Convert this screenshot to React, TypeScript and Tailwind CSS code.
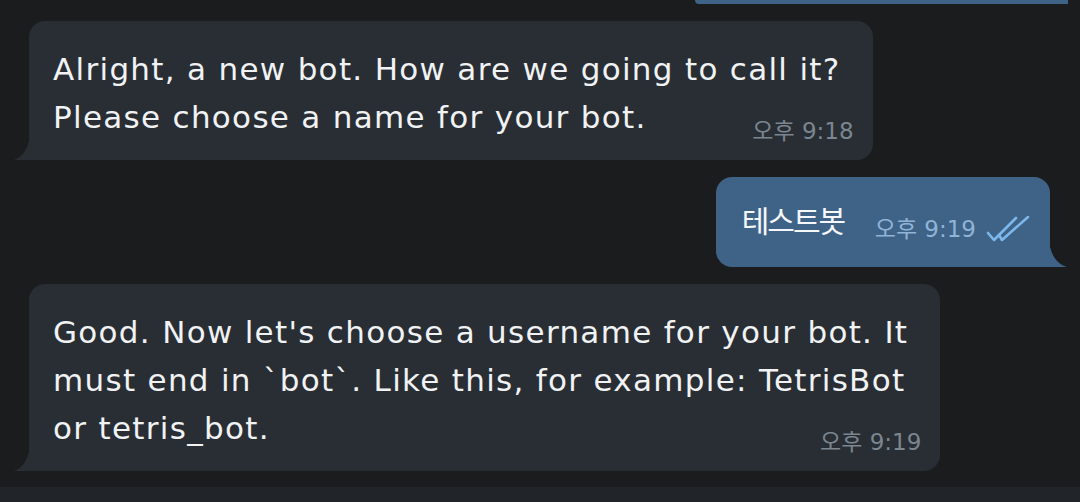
const font = "font-['DejaVu_Sans','Noto_Sans_CJK_KR',sans-serif]";

const TailLeft = () => (
  <svg
    className="absolute bottom-0 -left-[15px]"
    width="16"
    height="30"
    viewBox="0 0 16 30"
  >
    <path d="M16 0 C16 17 9 27 0 30 H16 Z" fill="#282e34" />
  </svg>
);

const TailRight = () => (
  <svg
    className="absolute bottom-0 -right-[17px]"
    width="18"
    height="30"
    viewBox="0 0 18 30"
  >
    <path d="M0 0 C0 17 8 27 18 30 H0 Z" fill="#3f6387" />
  </svg>
);

const DoubleCheck = () => (
  <svg width="44" height="27" viewBox="0 0 44 27" fill="none">
    <path
      d="M2 17 L8 24 L30 2"
      stroke="#7cb8ee"
      strokeWidth="2.6"
      strokeLinecap="round"
      strokeLinejoin="round"
    />
    <path
      d="M13 19 L16 24 L42 1"
      stroke="#7cb8ee"
      strokeWidth="2.6"
      strokeLinecap="round"
      strokeLinejoin="round"
    />
  </svg>
);

const Incoming = ({ lines, time }: { lines: string[]; time: string }) => (
  <div className="relative self-start ml-[29px] rounded-2xl rounded-bl-none bg-[#282e34] pl-[24px] pr-[32px] pt-[24px] pb-[19px]">
    {lines.map((l) => (
      <div
        key={l}
        className="whitespace-nowrap text-[31px] leading-[48px] tracking-[1.3px] text-[#f1f2f3]"
      >
        {l}
      </div>
    ))}
    <span className="absolute right-[19px] bottom-[14px] whitespace-nowrap text-[23px] leading-[30px] text-[#7b8690]">
      {time}
    </span>
    <TailLeft />
  </div>
);

export default function App() {
  return (
    <div className={`flex h-[502px] w-[1080px] flex-col overflow-hidden bg-[#1b1c1e] ${font}`}>
      {/* previous outgoing message, cut off at the top */}
      <div className="ml-auto mr-[12px] h-[4px] w-[373px] rounded-bl-[6px] bg-[#3f6387]" />

      <div className="mt-[17px] flex flex-col gap-[17px]">
        <Incoming
          lines={[
            "Alright, a new bot. How are we going to call it?",
            "Please choose a name for your bot.",
          ]}
          time="오후 9:18"
        />

        <div className="relative self-end mr-[30px] flex items-center rounded-2xl rounded-br-none bg-[#3f6387] pl-[26px] pr-[20px] pt-[21px] pb-[21px]">
          <span className="w-[102px] whitespace-nowrap text-[30px] leading-[48px] tracking-[-2px] text-[#f5f7fa]">
            테스트봇
          </span>
          <span className="ml-[31px] mt-[14px] whitespace-nowrap text-[23px] leading-[30px] text-[#8fb4d7]">
            오후 9:19
          </span>
          <span className="ml-[10px] mt-[14px] flex">
            <DoubleCheck />
          </span>
          <TailRight />
        </div>

        <Incoming
          lines={[
            "Good. Now let's choose a username for your bot. It",
            "must end in `bot`. Like this, for example: TetrisBot",
            "or tetris_bot.",
          ]}
          time="오후 9:19"
        />
      </div>

      <div className="mt-auto h-[15px] bg-[#212428]" />
    </div>
  );
}
